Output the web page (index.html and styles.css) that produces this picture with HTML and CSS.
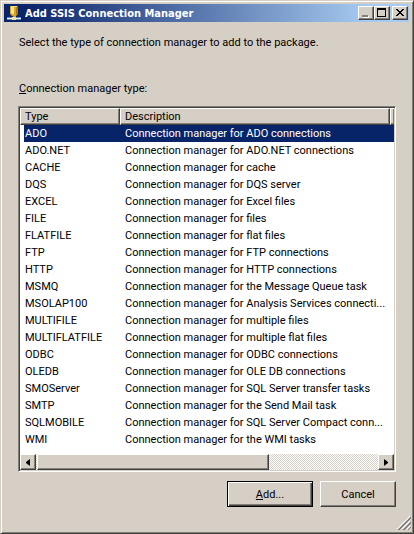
FILE: index.html
```html
<!DOCTYPE html>
<html lang="en">
<head>
<meta charset="utf-8">
<title>Add SSIS Connection Manager</title>
<link rel="stylesheet" href="styles.css">
</head>
<body>
<main class="window">
  <header class="titlebar">
    <svg class="app-icon" width="16" height="16" viewBox="0 0 16 16" aria-hidden="true">
      <path d="M1 12h14v3H1z" fill="#5f86b5"/>
      <path d="M1 13h5v1H1zM10 13h5v1h-5z" fill="#e8f4fa"/>
      <path d="M7 10h3v3H7z" fill="#c9a040"/>
      <path d="M6 12h4v3H6z" fill="#f3e3b0"/>
      <path d="M4 1h7l1 1v7l-2 2H6L4 9z" fill="#d9a520"/>
      <path d="M5 2h3v7H6L5 8z" fill="#fbe79a"/>
      <path d="M10 2h2v7l-2 1z" fill="#a87814"/>
      <path d="M5 1h6v1H5z" fill="#f6dc86"/>
    </svg>
    <h1 class="title">Add SSIS Connection Manager</h1>
    <div class="captions">
      <button class="bevel caption" type="button" aria-label="Minimize">
        <svg width="12" height="10" viewBox="0 0 12 10"><path d="M3 8h6v2H3z" fill="#fff"/><path d="M2 7h6v2H2z" fill="#808080"/></svg>
      </button>
      <button class="bevel caption" type="button" aria-label="Maximize">
        <svg width="12" height="10" viewBox="0 0 12 10"><path d="M1 0h9v9H1zM2 2v6h7V2z" fill="#000" fill-rule="evenodd"/></svg>
      </button>
      <button class="bevel caption close" type="button" aria-label="Close">
        <svg width="12" height="10" viewBox="0 0 12 10"><path d="M2 1h2v1h1v1h2V2h1V1h2v1H9v1H8v1H7v1h1v1h1v1h1v1H8V7H7V6H5v1H4v1H2V7h1V6h1V5h1V4H4V3H3V2H2z" fill="#000"/></svg>
      </button>
    </div>
  </header>

  <div class="content">
    <p class="intro">Select the type of connection manager to add to the package.</p>
    <p class="label" id="type-label"><u>C</u>onnection manager type:</p>

    <div class="listview">
      <table class="types" aria-labelledby="type-label">
        <colgroup><col class="col-type"><col><col class="col-rest"></colgroup>
        <thead><tr><th>Type</th><th>Description</th><th></th></tr></thead>
        <tbody>
          <tr class="selected"><td>ADO</td><td>Connection manager for ADO connections</td><td></td></tr>
          <tr><td>ADO.NET</td><td>Connection manager for ADO.NET connections</td><td></td></tr>
          <tr><td>CACHE</td><td>Connection manager for cache</td><td></td></tr>
          <tr><td>DQS</td><td>Connection manager for DQS server</td><td></td></tr>
          <tr><td>EXCEL</td><td>Connection manager for Excel files</td><td></td></tr>
          <tr><td>FILE</td><td>Connection manager for files</td><td></td></tr>
          <tr><td>FLATFILE</td><td>Connection manager for flat files</td><td></td></tr>
          <tr><td>FTP</td><td>Connection manager for FTP connections</td><td></td></tr>
          <tr><td>HTTP</td><td>Connection manager for HTTP connections</td><td></td></tr>
          <tr><td>MSMQ</td><td>Connection manager for the Message Queue task</td><td></td></tr>
          <tr><td>MSOLAP100</td><td>Connection manager for Analysis Services connecti...</td><td></td></tr>
          <tr><td>MULTIFILE</td><td>Connection manager for multiple files</td><td></td></tr>
          <tr><td>MULTIFLATFILE</td><td>Connection manager for multiple flat files</td><td></td></tr>
          <tr><td>ODBC</td><td>Connection manager for ODBC connections</td><td></td></tr>
          <tr><td>OLEDB</td><td>Connection manager for OLE DB connections</td><td></td></tr>
          <tr><td>SMOServer</td><td>Connection manager for SQL Server transfer tasks</td><td></td></tr>
          <tr><td>SMTP</td><td>Connection manager for the Send Mail task</td><td></td></tr>
          <tr><td>SQLMOBILE</td><td>Connection manager for SQL Server Compact conn...</td><td></td></tr>
          <tr><td>WMI</td><td>Connection manager for the WMI tasks</td><td></td></tr>
        </tbody>
      </table>
      <div class="scrollbar">
        <button class="bevel arrow" type="button" aria-label="Scroll left">
          <svg width="4" height="7" viewBox="0 0 4 7"><path d="M4 0v7L0 4V3z"/></svg>
        </button>
        <div class="track"><div class="bevel thumb"></div></div>
        <button class="bevel arrow" type="button" aria-label="Scroll right">
          <svg width="4" height="7" viewBox="0 0 4 7"><path d="M0 0v7l4-3V3z"/></svg>
        </button>
      </div>
    </div>

    <div class="actions">
      <button class="bevel action default" type="button"><span><u>A</u>dd...</span></button>
      <button class="bevel action" type="button">Cancel</button>
    </div>
  </div>
  <svg class="grip" width="14" height="14" viewBox="0 0 14 14" aria-hidden="true">
    <path d="M0 13L13 0M5 13l8-8M10 13l3-3" stroke="#fff" fill="none"/>
    <path d="M1 14L14 1M2 14L14 2M6 14l8-8M7 14l7-7M11 14l3-3" stroke="#808080" fill="none"/>
  </svg>
</main>
</body>
</html>
```
FILE: styles.css
```css
:root {
  --face: #d6cfc6;
  --light: #ffffff;
  --shadow: #848078;
  --dark: #404040;
  --select: #082468;
}

* {
  box-sizing: border-box;
}

body {
  margin: 0;
  font: 11px/17px Roboto, "DejaVu Sans Condensed", sans-serif;
  color: #000;
}

button {
  padding: 0;
  font: inherit;
  color: inherit;
}

h1,
p {
  margin: 0;
  font-size: inherit;
}

.window {
  position: relative;
  display: flex;
  flex-direction: column;
  min-height: 100vh;
  padding: 2px 3px 2px 2px;
  background: var(--face);
  border: 1px solid;
  border-color: var(--face) var(--dark) var(--dark) var(--face);
  box-shadow: inset 1px 1px var(--light), inset -1px -1px var(--shadow);
}

.bevel {
  background: var(--face);
  border: 1px solid;
  border-color: var(--light) var(--dark) var(--dark) var(--light);
  border-radius: 0;
  box-shadow: inset -1px -1px var(--shadow);
}

.titlebar {
  display: flex;
  align-items: center;
  gap: 3px;
  height: 18px;
  margin: 1px;
  padding: 0 1px 0 2px;
  background: linear-gradient(to right, #0a246a 5%, #a6caf0 90%);
}

.title {
  flex: 1;
  overflow: hidden;
  font: bold 11px/17px "DejaVu Sans Condensed", "DejaVu Sans", sans-serif;
  white-space: nowrap;
  color: #fff;
}

.captions {
  display: flex;
}

.caption {
  display: flex;
  align-items: center;
  justify-content: center;
  width: 16px;
  height: 14px;
}

.caption.close {
  margin-left: 2px;
}

.content {
  flex: 1;
  display: flex;
  flex-direction: column;
  padding: 11px 14px 24px 15px;
}

.intro {
  margin-bottom: 29px;
}

.label {
  margin-bottom: 9px;
}

.intro,
.label {
  padding-left: 1px;
}

.listview {
  flex: 1;
  display: flex;
  flex-direction: column;
  justify-content: space-between;
  background: #fff;
  border: 1px solid;
  border-color: var(--shadow) var(--light) var(--light) var(--shadow);
  box-shadow: inset 1px 1px var(--dark), inset -1px -1px var(--face);
  padding: 1px;
}

.types {
  width: 100%;
  table-layout: fixed;
  border-spacing: 0;
}

.col-type {
  width: 100px;
}

.col-rest {
  width: 4px;
}

.types th,
.types td {
  height: 17px;
  overflow: hidden;
  text-align: left;
  font-weight: normal;
  white-space: nowrap;
}

.types th {
  padding: 1px 0 0 4px;
  line-height: 14px;
  background: var(--face);
  border: 1px solid;
  border-color: var(--light) var(--dark) var(--dark) var(--light);
  box-shadow: inset -1px -1px var(--shadow);
}

.types th:last-child {
  padding: 0;
  border-right: 0;
}

.types td {
  padding: 1px 0 0 5px;
  line-height: 16px;
}

.types td:last-child {
  padding: 0;
}

.types td:first-child {
  padding-left: 1px;
  border-left: 4px solid #fff;
}

.selected td {
  color: #fff;
  background: var(--select);
}

.scrollbar {
  display: flex;
  height: 16px;
}

.arrow {
  display: flex;
  align-items: center;
  justify-content: center;
  width: 16px;
}

.track {
  flex: 1;
  padding-left: 1px;
  background: repeating-conic-gradient(#fff 0 25%, var(--face) 0 50%) 0 0 / 2px 2px;
}

.thumb {
  width: 68%;
  height: 100%;
}

.actions {
  display: flex;
  justify-content: flex-end;
  gap: 7px;
  margin-top: 9px;
}

.action {
  width: 76px;
  height: 26px;
}

.action.default {
  width: 86px;
  border-color: #000;
  box-shadow: inset 1px 1px var(--light), inset -1px -1px var(--dark), inset -2px -2px var(--shadow);
}

.grip {
  position: absolute;
  right: 2px;
  bottom: 3px;
}
```
